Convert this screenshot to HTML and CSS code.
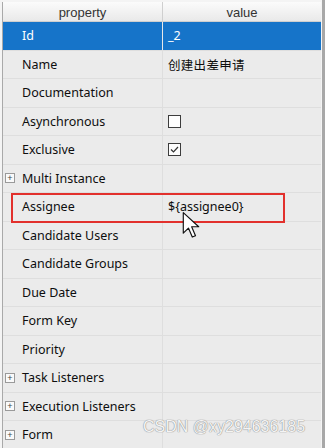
FILE: index.html
```html
<!DOCTYPE html>
<html lang="zh">
<head>
  <meta charset="UTF-8" />
  <title>Properties</title>
  <link rel="stylesheet" href="styles.css">
</head>
<body>
  <div class="panel">
    <div class="sheet">
      <div class="head">
        <div class="cell">property</div>
        <div class="cell">value</div>
      </div>

      <div class="row selected">
        <div class="cell name">Id</div>
        <div class="cell val">_2</div>
      </div>
      <div class="row">
        <div class="cell name">Name</div>
        <div class="cell val cjk">创建出差申请</div>
      </div>
      <div class="row">
        <div class="cell name">Documentation</div>
        <div class="cell val"></div>
      </div>
      <div class="row">
        <div class="cell name">Asynchronous</div>
        <div class="cell val"><span class="check"></span></div>
      </div>
      <div class="row">
        <div class="cell name">Exclusive</div>
        <div class="cell val">
          <span class="check">
            <svg width="11" height="11" viewBox="0 0 11 11"><path d="M2 5.5 L4.5 8 L9 3" fill="none" stroke="#333" stroke-width="1.2"/></svg>
          </span>
        </div>
      </div>
      <div class="row">
        <div class="cell name"><span class="plus">+</span>Multi Instance</div>
        <div class="cell val"></div>
      </div>
      <div class="row marked">
        <div class="cell name">Assignee</div>
        <div class="cell val">${assignee0}</div>
      </div>
      <div class="row">
        <div class="cell name">Candidate Users</div>
        <div class="cell val"></div>
      </div>
      <div class="row">
        <div class="cell name">Candidate Groups</div>
        <div class="cell val"></div>
      </div>
      <div class="row">
        <div class="cell name">Due Date</div>
        <div class="cell val"></div>
      </div>
      <div class="row">
        <div class="cell name">Form Key</div>
        <div class="cell val"></div>
      </div>
      <div class="row">
        <div class="cell name">Priority</div>
        <div class="cell val"></div>
      </div>
      <div class="row">
        <div class="cell name"><span class="plus">+</span>Task Listeners</div>
        <div class="cell val"></div>
      </div>
      <div class="row">
        <div class="cell name"><span class="plus">+</span>Execution Listeners</div>
        <div class="cell val"></div>
      </div>
      <div class="row">
        <div class="cell name"><span class="plus">+</span>Form</div>
        <div class="cell val"></div>
      </div>
    </div>

    <div class="highlight"></div>
    <svg class="cursor" width="18" height="29" viewBox="0 0 14 22">
      <path d="M1 1 L1 17 L5 13 L8 20 L10.5 19 L7.5 12 L13 12 Z" fill="#fff" stroke="#111" stroke-width="0.9" stroke-linejoin="round"/>
    </svg>
    <div class="watermark">CSDN @xy294636185</div>
  </div>
</body>
</html>
```

FILE: styles.css
```css
body {
  margin: 0;
  background-color: #f2f2f2;
  font-family: "Noto Sans", "Noto Sans CJK SC", sans-serif;
  font-size: 12.5px;
  color: #0e0e0e;
}
.panel {
  position: relative;
  width: 325px;
  height: 448px;
  overflow: hidden;
  padding-top: 2px;
  box-sizing: border-box;
  background-color: #f4f4f4;
}
.sheet {
  margin-left: 2px;
  width: 318px;
  border-left: 1px solid #a9a9a9;
  background-color: #ebebeb;
}
.panel::after {
  content: "";
  position: absolute;
  top: 0;
  right: 0;
  width: 3px;
  height: 100%;
  background-color: #a8a8a8;
}
.head {
  display: grid;
  grid-template-columns: 160px 1fr;
  height: 19px;
  background: linear-gradient(#fbfbfb, #e9e9e9);
  border-bottom: 1px solid #cfcfcf;
  font-family: "Liberation Sans", sans-serif;
  font-size: 13px;
  color: #333;
}
.head .cell {
  text-align: center;
  line-height: 21px;
}
.head .cell:first-child {
  border-right: 1px solid #cfcfcf;
}
.row {
  display: grid;
  grid-template-columns: 160px 1fr;
  height: 28.5px;
  box-sizing: border-box;
  border-bottom: 1px solid #dedede;
}
.row .cell {
  display: flex;
  align-items: center;
}
.row .name {
  border-right: 1px solid #dedede;
  padding-left: 19px;
  position: relative;
}
.row .val {
  padding-left: 5px;
}
.selected {
  background-color: #1674c9;
  color: #fff;
}
.selected .name {
  border-right-color: #e8e8e8;
}
.cjk {
  font-family: "Noto Sans CJK SC", sans-serif;
  letter-spacing: 0.3px;
}
.plus {
  position: absolute;
  left: 2px;
  top: 50%;
  margin-top: -5px;
  width: 8px;
  height: 8px;
  border: 1px solid #9a9a9a;
  background-color: #fafafa;
  font-family: "Liberation Sans", sans-serif;
  font-size: 9px;
  line-height: 8px;
  text-align: center;
  color: #444;
}
.check {
  display: inline-flex;
  align-items: center;
  justify-content: center;
  width: 11px;
  height: 11px;
  border: 1px solid #3c3c3c;
  background-color: #fdfdfd;
}
.highlight {
  position: absolute;
  left: 11px;
  top: 193px;
  width: 270px;
  height: 26px;
  border: 2px solid #e2302c;
}
.cursor {
  position: absolute;
  left: 182px;
  top: 211px;
}
.watermark {
  position: absolute;
  left: 143px;
  top: 418px;
  font-family: "Liberation Sans", sans-serif;
  font-size: 16px;
  color: #f4f4f4;
  text-shadow: 0 0 1px #8a8a8a, 0 0 1px #8a8a8a;
}
```
